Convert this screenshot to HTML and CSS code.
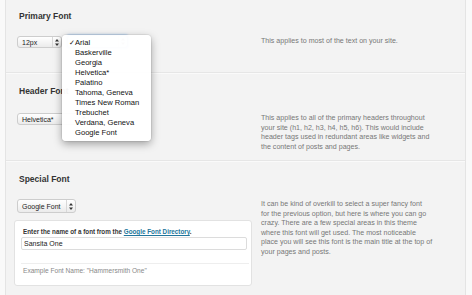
FILE: index.html
```html
<!DOCTYPE html>
<html lang="en">
<head>
    <meta charset="UTF-8">
    <meta name="viewport" content="width=device-width, initial-scale=1.0">
    <title>Font Options</title>
    <link rel="stylesheet" href="styles.css">
</head>
<body>
    <div class="options">
        <section class="option option-first">
            <h3 class="option-title">Primary Font</h3>
            <div class="option-controls">
                <div class="select select-size">
                    <span class="select-value">12px</span>
                    <span class="select-arrows">
                        <svg width="4" height="7" viewBox="0 0 4 7"><path d="M2 0L4 2.6H0zM2 7L0 4.4H4z" fill="#333"/></svg>
                    </span>
                </div>
                <div class="select select-font is-focused">
                    <span class="select-value"></span>
                    <span class="select-arrows">
                        <svg width="4" height="7" viewBox="0 0 4 7"><path d="M2 0L4 2.6H0zM2 7L0 4.4H4z" fill="#999"/></svg>
                    </span>
                    <ul class="popup-menu">
                        <li class="is-checked">Arial</li>
                        <li>Baskerville</li>
                        <li>Georgia</li>
                        <li>Helvetica*</li>
                        <li>Palatino</li>
                        <li>Tahoma, Geneva</li>
                        <li>Times New Roman</li>
                        <li>Trebuchet</li>
                        <li>Verdana, Geneva</li>
                        <li>Google Font</li>
                    </ul>
                </div>
            </div>
            <p class="option-desc">This applies to most of the text on your site.</p>
        </section>

        <section class="option option-header">
            <h3 class="option-title">Header Font</h3>
            <div class="option-controls">
                <div class="select select-wide">
                    <span class="select-value">Helvetica*</span>
                    <span class="select-arrows">
                        <svg width="4" height="7" viewBox="0 0 4 7"><path d="M2 0L4 2.6H0zM2 7L0 4.4H4z" fill="#333"/></svg>
                    </span>
                </div>
            </div>
            <p class="option-desc">This applies to all of the primary headers throughout your site (h1, h2, h3, h4, h5, h6). This would include header tags used in redundant areas like widgets and the content of posts and pages.</p>
        </section>

        <section class="option">
            <h3 class="option-title">Special Font</h3>
            <div class="option-controls option-stack">
                <div class="select select-google">
                    <span class="select-value">Google Font</span>
                    <span class="select-arrows">
                        <svg width="4" height="7" viewBox="0 0 4 7"><path d="M2 0L4 2.6H0zM2 7L0 4.4H4z" fill="#333"/></svg>
                    </span>
                </div>
                <div class="font-panel">
                    <label class="font-label" for="google-font">Enter the name of a font from the <a href="#">Google Font Directory</a>.</label>
                    <input class="font-input" id="google-font" type="text" value="Sansita One">
                    <div class="font-example">Example Font Name: "Hammersmith One"</div>
                </div>
            </div>
            <p class="option-desc">It can be kind of overkill to select a super fancy font<br>for the previous option, but here is where you can go crazy. There are a few special areas in this theme where this font will get used. The most noticeable place you will see this font is the main title at the top of your pages and posts.</p>
        </section>
    </div>
</body>
</html>
```

FILE: styles.css
```css
body {
    margin: 0;
    background-color: #f9f9f9;
    font-family: "Liberation Sans", Arial, sans-serif;
    color: #333;
}
.options {
    margin-left: 5px;
    width: 459px;
    min-height: 295px;
    background-color: #f3f3f3;
    border-left: 1px solid #e4e4e4;
    border-right: 1px solid #e4e4e4;
}
.option {
    display: grid;
    grid-template-columns: 233px 173.5px;
    column-gap: 9px;
    padding: 12px 0 8px 13px;
    border-bottom: 1px solid #e6e6e6;
    box-shadow: 0 1px 0 #fafafa;
}
.option-first {
    padding-top: 10px;
    padding-bottom: 24px;
}
.option-header .option-title {
    margin-bottom: 16px;
}
.option:last-child {
    border-bottom: none;
    box-shadow: none;
}
.option-title {
    grid-column: 1 / 3;
    margin: 0 0 14px;
    font-size: 8.5px;
    line-height: 12px;
    font-weight: bold;
    color: #333;
}
.option-controls {
    display: flex;
    align-items: flex-start;
    gap: 5px;
    margin-left: -2px;
}
.option-stack {
    flex-direction: column;
    gap: 7px;
}
.option-desc {
    margin: 1px 0 0;
    font-size: 7.1px;
    line-height: 9.5px;
    color: #777;
}
.select {
    position: relative;
    box-sizing: border-box;
    display: flex;
    align-items: center;
    height: 12px;
    border: 1px solid #cdcdcd;
    border-radius: 3px;
    background: linear-gradient(#ffffff, #ebebeb);
    font-size: 7px;
    color: #222;
}
.select-value {
    flex: 1;
    padding: 0 4px;
    white-space: nowrap;
}
.select-arrows {
    display: flex;
    align-items: center;
    justify-content: center;
    width: 8px;
    height: 100%;
    border-left: 1px solid #d8d8d8;
}
.select-size {
    width: 45px;
}
.select-font {
    width: 61px;
    height: 13px;
    margin-top: -1px;
}
.select-wide {
    width: 72px;
}
.select-google {
    width: 59px;
    height: 14px;
}
.is-focused {
    border-color: #a8c4e4;
    box-shadow: 0 0 2px 1px #b9d3f0;
    background: #e3edf8;
}
.popup-menu {
    position: absolute;
    top: -1px;
    left: -6px;
    z-index: 2;
    width: 89px;
    margin: 0;
    padding: 3px 0 3px;
    list-style: none;
    background: rgba(255, 255, 255, 0.96);
    border-radius: 4px;
    box-shadow: 0 3px 9px rgba(0, 0, 0, 0.35), 0 0 0 1px rgba(0, 0, 0, 0.06);
}
.popup-menu li {
    position: relative;
    padding-left: 13px;
    font-size: 7.6px;
    line-height: 10px;
    color: #111;
    white-space: nowrap;
}
.popup-menu .is-checked::before {
    content: "\2713";
    position: absolute;
    left: 7px;
    font-size: 7px;
}
.font-panel {
    box-sizing: border-box;
    width: 238px;
    margin-left: -3px;
    padding: 6px 5px 10px 6px;
    background: #fff;
    border: 1px solid #e2e2e2;
    border-radius: 3px;
}
.font-label {
    display: block;
    margin-left: 2px;
    font-size: 6.3px;
    line-height: 9px;
    font-weight: bold;
    color: #333;
}
.font-label a {
    color: #21759b;
}
.font-input {
    box-sizing: border-box;
    display: block;
    width: 226px;
    height: 13px;
    margin: 1px 0 13px;
    padding: 0 2px;
    border: 1px solid #dcdcdc;
    border-radius: 2px;
    font-family: "Liberation Sans", Arial, sans-serif;
    font-size: 7px;
    color: #222;
}
.font-example {
    width: 226px;
    padding: 2px 0 0 2px;
    border-top: 1px solid #eeeeee;
    font-size: 6.6px;
    line-height: 9px;
    color: #888;
}
```
